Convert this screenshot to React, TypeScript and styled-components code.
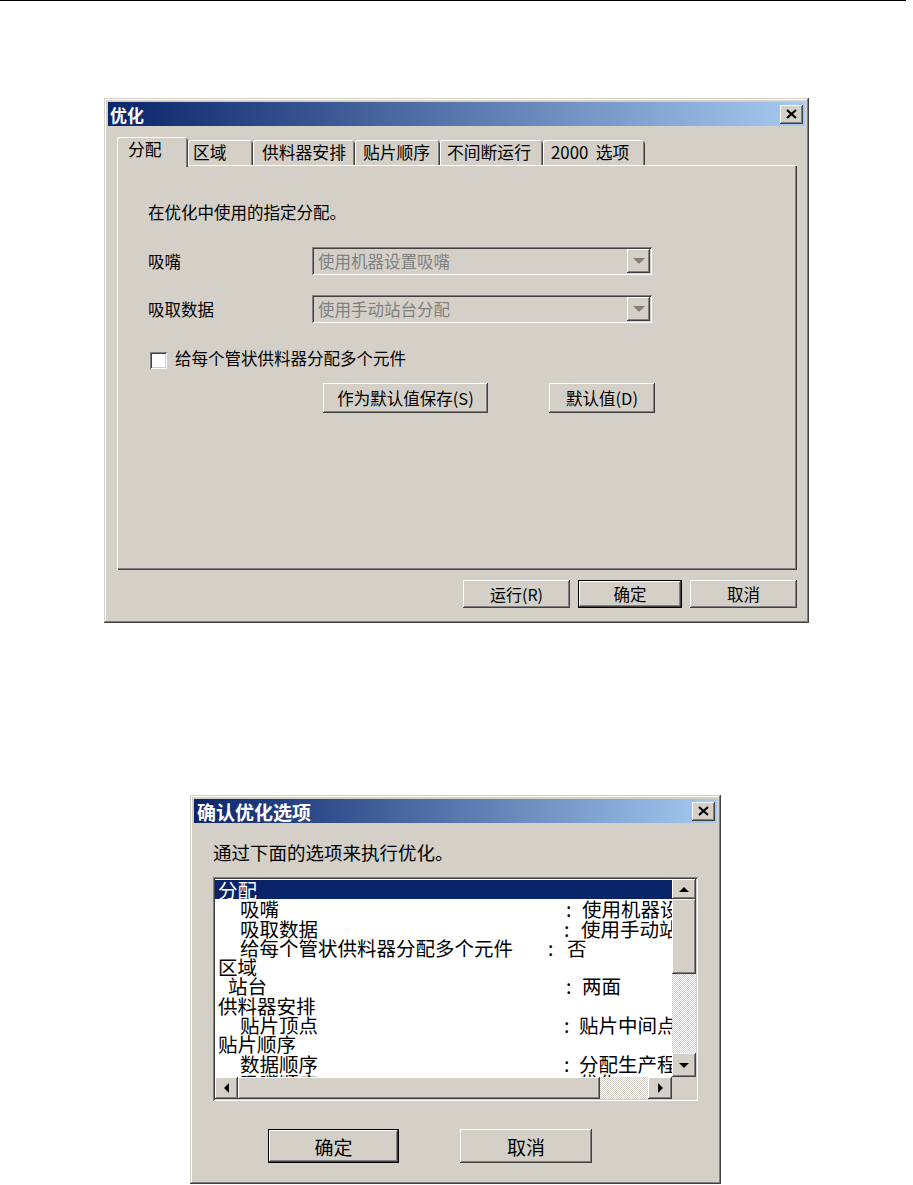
import React from "react";
import styled, { createGlobalStyle, css } from "styled-components";

const FACE = "#d4d0c8";
const FONT = `"Noto Sans CJK SC", "Liberation Sans", sans-serif`;

const GlobalStyle = createGlobalStyle`
  html, body { margin: 0; padding: 0; background: #fff; }
  body { font-family: ${FONT}; color: #000; }
  * { box-sizing: border-box; }
`;

const raised = css`
  box-shadow: inset -1px -1px #404040, inset 1px 1px #ffffff, inset -2px -2px #808080, inset 2px 2px ${FACE};
`;
const sunken = css`
  box-shadow: inset 1px 1px #808080, inset -1px -1px #ffffff, inset 2px 2px #404040, inset -2px -2px ${FACE};
`;

const Page = styled.div`
  width: 913px;
  min-height: 1185px;
  display: flex;
  flex-direction: column;
`;

const TopRule = styled.div`
  width: 906px;
  height: 1px;
  background: #000;
`;

const Window = styled.div<{ $x: number; $top: number; $w: number; $h: number }>`
  margin-left: ${(p) => p.$x}px;
  margin-top: ${(p) => p.$top}px;
  width: ${(p) => p.$w}px;
  height: ${(p) => p.$h}px;
  background: ${FACE};
  padding: 4px;
  display: flex;
  flex-direction: column;
  box-shadow: inset -1px -1px #404040, inset 1px 1px ${FACE}, inset -2px -2px #808080, inset 2px 2px #ffffff;
`;

const TitleBar = styled.div<{ $size: number; $pl: number }>`
  flex: 0 0 24px;
  display: flex;
  align-items: center;
  justify-content: space-between;
  padding: 0 2px 0 ${(p) => p.$pl}px;
  background: linear-gradient(to right, #0a246a, #a6caf0);
  color: #fff;
  font-weight: bold;
  font-size: ${(p) => p.$size}px;
  line-height: 1;
`;

const CloseBtn = styled.div`
  width: 23px;
  height: 19px;
  background: ${FACE};
  display: flex;
  align-items: center;
  justify-content: center;
  ${raised};
`;

const CloseIcon = () => (
  <svg width="11" height="10" viewBox="0 0 11 10">
    <path d="M1 1 L10 9 M10 1 L1 9" stroke="#000" strokeWidth="2.2" />
  </svg>
);

/* ---------- dialog 1 ---------- */

const Body1 = styled.div`
  flex: 1;
  display: flex;
  flex-direction: column;
  padding: 11px 8px 11px 9px;
  font-size: 16.5px;
`;

const TabStrip = styled.div`
  flex: 0 0 28px;
  display: flex;
  align-items: flex-end;
  position: relative;
  z-index: 1;
`;

const Tab = styled.div<{ $w: number; $pad: number; $active?: boolean }>`
  width: ${(p) => p.$w}px;
  height: ${(p) => (p.$active ? 30 : 25)}px;
  margin-bottom: ${(p) => (p.$active ? -2 : 0)}px;
  padding-left: ${(p) => p.$pad}px;
  padding-bottom: ${(p) => (p.$active ? 6 : 1)}px;
  display: flex;
  align-items: center;
  background: ${FACE};
  border-radius: 3px 3px 0 0;
  font-size: 16.8px;
  line-height: 1;
  white-space: pre;
  box-shadow: inset 1px 0 #ffffff, inset 0 1px #ffffff, inset -1px 0 #404040, inset -2px 0 #808080;
`;

const Panel = styled.div`
  flex: 0 0 405px;
  display: flex;
  flex-direction: column;
  padding: 37px 0 0 31px;
  box-shadow: inset 1px 1px #ffffff, inset -1px -1px #404040, inset -2px -2px #808080;
`;

const Intro = styled.div<{ $lh: number; $size?: number }>`
  line-height: ${(p) => p.$lh}px;
  height: ${(p) => p.$lh}px;
  font-size: ${(p) => (p.$size ? `${p.$size}px` : "inherit")};
  white-space: nowrap;
`;

const FieldRow = styled.div<{ $mt: number }>`
  margin-top: ${(p) => p.$mt}px;
  display: flex;
  align-items: center;
  height: 28px;
`;

const FieldLabel = styled.div`
  width: 164px;
  line-height: 20px;
`;

const Combo = styled.div`
  width: 340px;
  height: 28px;
  padding: 2px;
  display: flex;
  align-items: center;
  background: ${FACE};
  ${sunken};
`;

const ComboText = styled.div`
  flex: 1;
  padding-left: 4px;
  color: #808080;
  line-height: 20px;
  white-space: nowrap;
`;

const ComboButton = styled.div`
  width: 23px;
  height: 24px;
  display: flex;
  align-items: center;
  justify-content: center;
  background: ${FACE};
  ${raised};
`;

const CheckRow = styled.div`
  margin-top: 27px;
  height: 20px;
  display: flex;
  align-items: center;
`;

const CheckBox = styled.div`
  width: 17px;
  height: 17px;
  margin-left: 2px;
  background: #fff;
  ${sunken};
`;

const CheckLabel = styled.div`
  margin-left: 8px;
  margin-bottom: 4px;
  line-height: 20px;
  white-space: nowrap;
`;

const ButtonRow = styled.div<{ $mt: number; $ml: number; $gap: number; $end?: boolean }>`
  margin-top: ${(p) => p.$mt}px;
  margin-left: ${(p) => p.$ml}px;
  display: flex;
  gap: ${(p) => p.$gap}px;
  justify-content: ${(p) => (p.$end ? "flex-end" : "flex-start")};
`;

const Button = styled.button<{ $w: number; $h: number; $size: number; $default?: boolean }>`
  width: ${(p) => p.$w}px;
  height: ${(p) => p.$h}px;
  border: none;
  padding: 0;
  margin: 0;
  display: flex;
  align-items: center;
  justify-content: center;
  background: ${FACE};
  font-family: ${FONT};
  font-size: ${(p) => p.$size}px;
  line-height: 1;
  color: #000;
  white-space: nowrap;
  ${(p) =>
    p.$default
      ? css`
          box-shadow: inset 0 0 0 1px #000, inset -2px -2px #404040, inset 2px 2px #ffffff,
            inset -3px -3px #808080;
        `
      : raised};
`;

/* ---------- dialog 2 ---------- */

const Body2 = styled.div`
  flex: 1;
  display: flex;
  flex-direction: column;
  padding: 18px 0 0 19px;
`;

const ListBox = styled.div`
  margin-top: 14px;
  width: 485px;
  height: 224px;
  padding: 2px;
  display: grid;
  grid-template-columns: 457px 24px;
  grid-template-rows: 198px 22px;
  background: #fff;
  ${sunken};
`;

const Items = styled.div`
  overflow: hidden;
  background: #fff;
  padding-top: 1px;
  font-size: 19.5px;
`;

const ListRow = styled.div<{ $selected?: boolean }>`
  height: 19.3px;
  line-height: 19.3px;
  display: flex;
  white-space: nowrap;
  background: ${(p) => (p.$selected ? "#0a246a" : "transparent")};
  color: ${(p) => (p.$selected ? "#fff" : "#000")};
`;

const RowLabel = styled.span<{ $indent: number; $w?: number }>`
  flex: 0 0 auto;
  padding-left: ${(p) => p.$indent}px;
  width: ${(p) => (p.$w ? `${p.$w}px` : "auto")};
`;

const RowColon = styled.span<{ $w: number }>`
  flex: 0 0 ${(p) => p.$w}px;
`;

const RowValue = styled.span`
  flex: 0 0 auto;
`;

const track = css`
  background-color: #ffffff;
  background-image: repeating-conic-gradient(${FACE} 0 25%, #ffffff 0 50%);
  background-size: 2px 2px;
`;

const VScroll = styled.div`
  display: flex;
  flex-direction: column;
`;

const HScroll = styled.div`
  display: flex;
`;

const ScrollBtn = styled.div<{ $w: number; $h: number }>`
  flex: 0 0 auto;
  width: ${(p) => p.$w}px;
  height: ${(p) => p.$h}px;
  display: flex;
  align-items: center;
  justify-content: center;
  background: ${FACE};
  ${raised};
`;

const Track = styled.div`
  flex: 1;
  ${track};
`;

const Corner = styled.div`
  background: ${FACE};
`;

const Arrow = ({ dir, color = "#000" }: { dir: "up" | "down" | "left" | "right"; color?: string }) => {
  const pts: Record<string, string> = {
    up: "0,5 10,5 5,0",
    down: "0,0 10,0 5,5",
    left: "5,0 5,10 0,5",
    right: "0,0 0,10 5,5",
  };
  const horiz = dir === "left" || dir === "right";
  return (
    <svg width={horiz ? 5 : 10} height={horiz ? 10 : 5} viewBox={horiz ? "0 0 5 10" : "0 0 10 5"}>
      <polygon points={pts[dir]} fill={color} />
    </svg>
  );
};

const ComboArrow = () => (
  <svg width="12" height="6" viewBox="0 0 12 6">
    <polygon points="0,0 12,0 6,6" fill="#808080" />
  </svg>
);

type Item = {
  label: string;
  indent: number;
  w?: number;
  colon?: number;
  value?: string;
  selected?: boolean;
};

const items: Item[] = [
  { label: "分配", indent: 3, selected: true },
  { label: "吸嘴", indent: 25, w: 351, colon: 16, value: "使用机器设置吸嘴" },
  { label: "吸取数据", indent: 25, w: 349, colon: 17, value: "使用手动站台分配" },
  { label: "给每个管状供料器分配多个元件", indent: 25, w: 333, colon: 19, value: "否" },
  { label: "区域", indent: 3 },
  { label: "站台", indent: 13, w: 351, colon: 16, value: "两面" },
  { label: "供料器安排", indent: 3 },
  { label: "贴片顶点", indent: 25, w: 349, colon: 15, value: "贴片中间点" },
  { label: "贴片顺序", indent: 3 },
  { label: "数据顺序", indent: 25, w: 349, colon: 15, value: "分配生产程序" },
  { label: "吸嘴顺序", indent: 25, w: 349, colon: 15, value: "优化" },
];

const tabs = [
  { label: "分配", w: 71, pad: 11, active: true },
  { label: "区域", w: 65, pad: 5 },
  { label: "供料器安排", w: 102, pad: 9 },
  { label: "贴片顺序", w: 85, pad: 8 },
  { label: "不间断运行", w: 103, pad: 7 },
  { label: "2000  选项", w: 102, pad: 8 },
];

export default function App() {
  return (
    <Page>
      <GlobalStyle />
      <TopRule />

      <Window $x={104} $top={97} $w={705} $h={525}>
        <TitleBar $size={17} $pl={2}>
          <span>优化</span>
          <CloseBtn>
            <CloseIcon />
          </CloseBtn>
        </TitleBar>
        <Body1>
          <TabStrip>
            {tabs.map((t) => (
              <Tab key={t.label} $w={t.w} $pad={t.pad} $active={t.active}>
                {t.label}
              </Tab>
            ))}
          </TabStrip>
          <Panel>
            <Intro $lh={20}>在优化中使用的指定分配。</Intro>
            <FieldRow $mt={25}>
              <FieldLabel>吸嘴</FieldLabel>
              <Combo>
                <ComboText>使用机器设置吸嘴</ComboText>
                <ComboButton>
                  <ComboArrow />
                </ComboButton>
              </Combo>
            </FieldRow>
            <FieldRow $mt={20}>
              <FieldLabel>吸取数据</FieldLabel>
              <Combo>
                <ComboText>使用手动站台分配</ComboText>
                <ComboButton>
                  <ComboArrow />
                </ComboButton>
              </Combo>
            </FieldRow>
            <CheckRow>
              <CheckBox />
              <CheckLabel>给每个管状供料器分配多个元件</CheckLabel>
            </CheckRow>
            <ButtonRow $mt={13} $ml={175} $gap={61}>
              <Button $w={165} $h={30} $size={16.5}>
                作为默认值保存(S)
              </Button>
              <Button $w={106} $h={30} $size={16.5}>
                默认值(D)
              </Button>
            </ButtonRow>
          </Panel>
          <ButtonRow $mt={10} $ml={0} $gap={8} $end>
            <Button $w={107} $h={28} $size={16}>
              运行(R)
            </Button>
            <Button $w={104} $h={28} $size={16.5} $default>
              确定
            </Button>
            <Button $w={107} $h={28} $size={16.5}>
              取消
            </Button>
          </ButtonRow>
        </Body1>
      </Window>

      <Window $x={190} $top={172} $w={531} $h={389}>
        <TitleBar $size={19} $pl={3}>
          <span>确认优化选项</span>
          <CloseBtn>
            <CloseIcon />
          </CloseBtn>
        </TitleBar>
        <Body2>
          <Intro $lh={22} $size={18.5}>
            通过下面的选项来执行优化。
          </Intro>
          <ListBox>
            <Items>
              {items.map((it) => (
                <ListRow key={it.label} $selected={it.selected}>
                  <RowLabel $indent={it.indent} $w={it.w}>
                    {it.label}
                  </RowLabel>
                  {it.value && (
                    <>
                      <RowColon $w={it.colon ?? 16}>:</RowColon>
                      <RowValue>{it.value}</RowValue>
                    </>
                  )}
                </ListRow>
              ))}
            </Items>
            <VScroll>
              <ScrollBtn $w={24} $h={20}>
                <Arrow dir="up" />
              </ScrollBtn>
              <ScrollBtn $w={24} $h={75} />
              <Track />
              <ScrollBtn $w={24} $h={24}>
                <Arrow dir="down" />
              </ScrollBtn>
            </VScroll>
            <HScroll>
              <ScrollBtn $w={23} $h={22}>
                <Arrow dir="left" />
              </ScrollBtn>
              <ScrollBtn $w={362} $h={22} />
              <Track />
              <ScrollBtn $w={24} $h={22}>
                <Arrow dir="right" />
              </ScrollBtn>
            </HScroll>
            <Corner />
          </ListBox>
          <ButtonRow $mt={28} $ml={55} $gap={61}>
            <Button $w={131} $h={34} $size={19} $default>
              确定
            </Button>
            <Button $w={132} $h={34} $size={19}>
              取消
            </Button>
          </ButtonRow>
        </Body2>
      </Window>
    </Page>
  );
}
